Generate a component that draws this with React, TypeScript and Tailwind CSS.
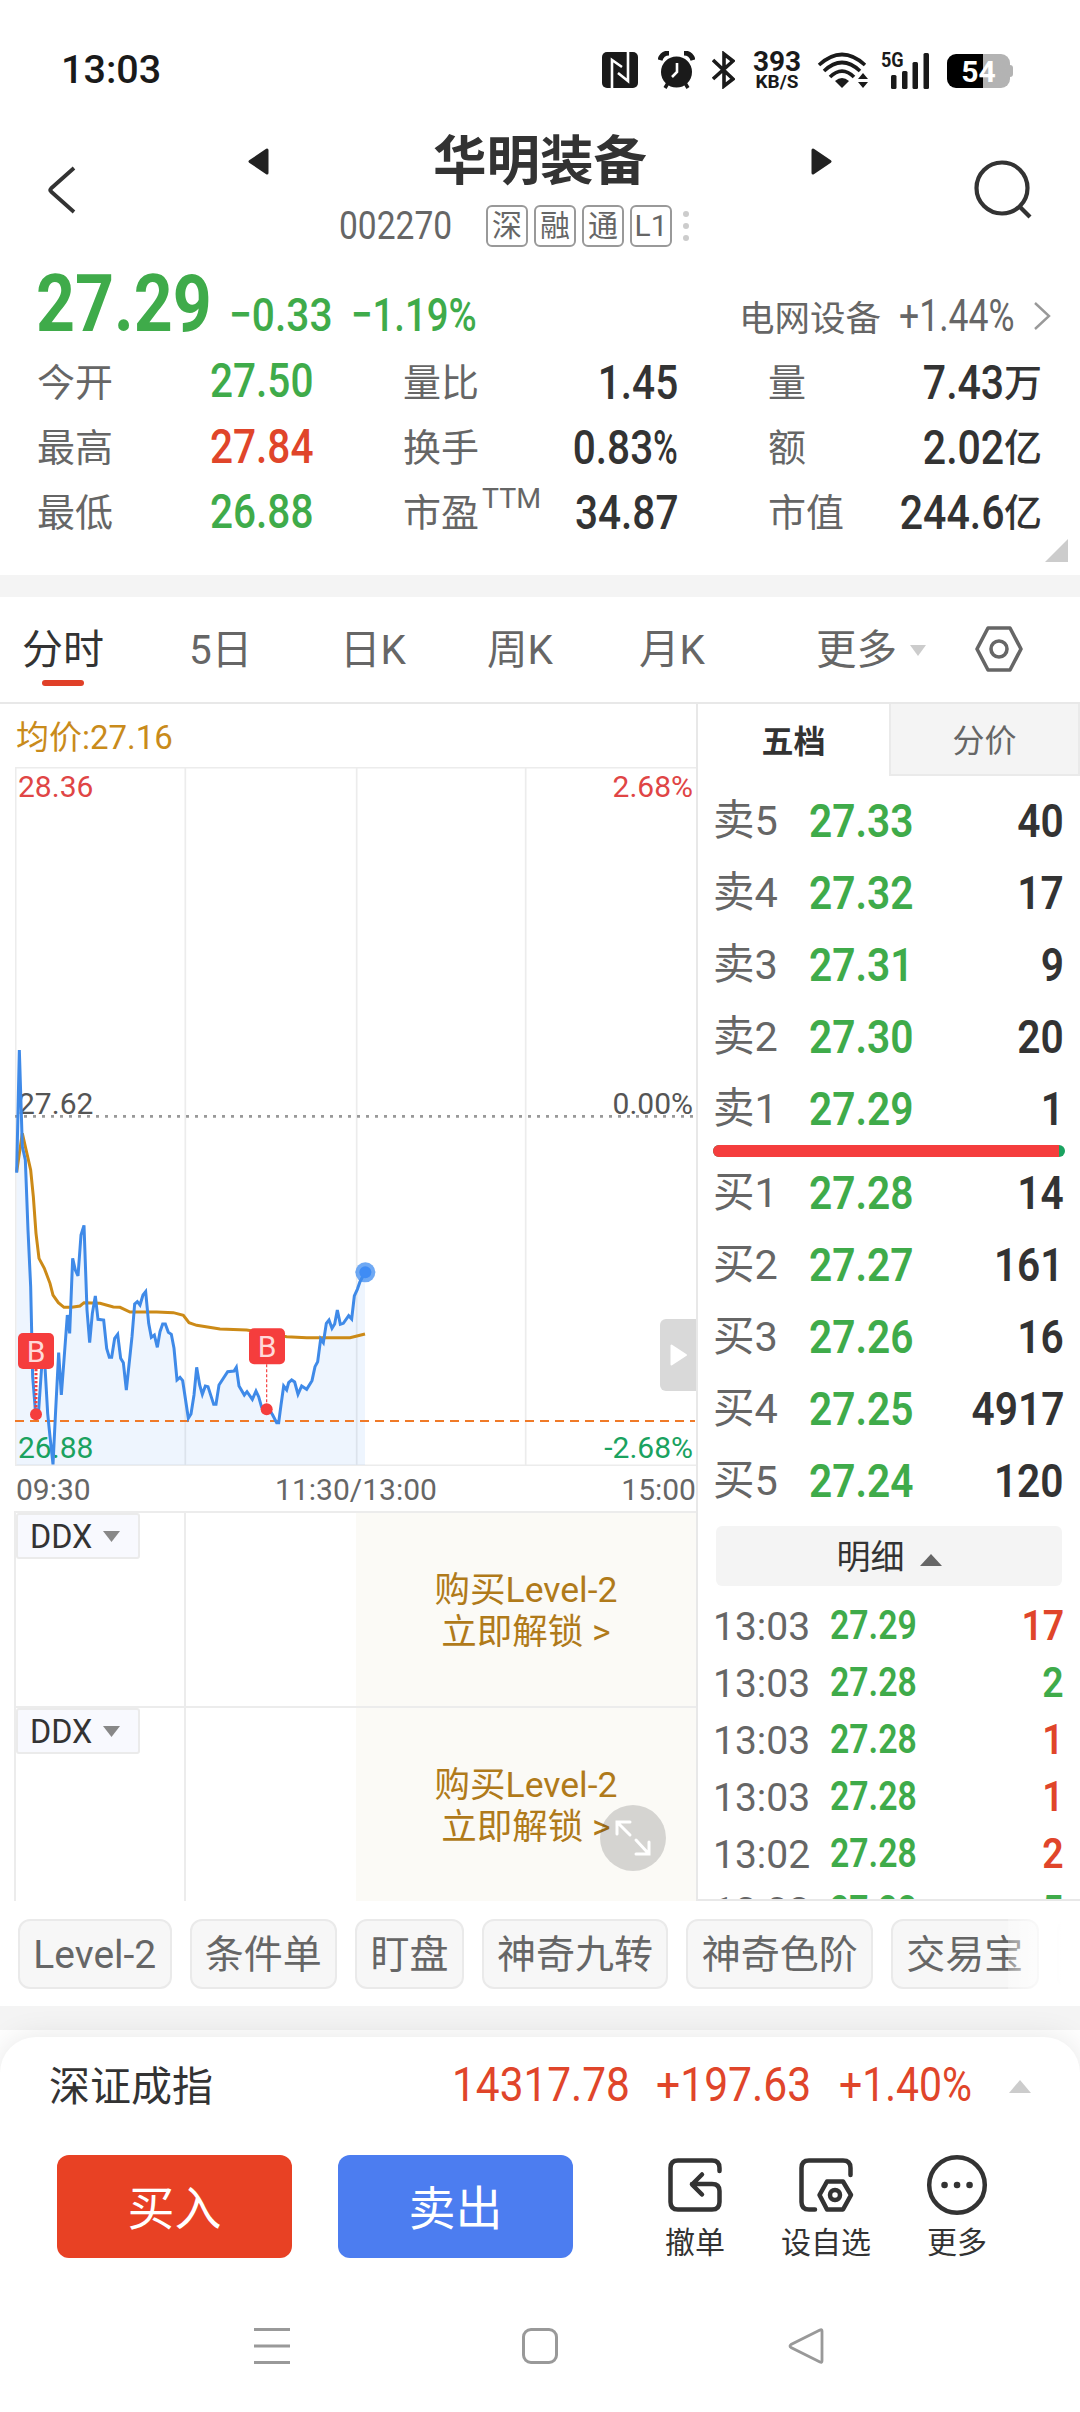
import type { ReactNode } from "react";
import clsx from "clsx";

const GREEN = "text-[#3fab4a]";
const RED = "text-[#e0452a]";
const DARK = "text-[#333]";

// Figures are set slightly condensed, like the DIN face trading apps use.
function Num({ children, className }: { children: ReactNode; className?: string }) {
  return <span className={clsx("inline-block whitespace-nowrap", className)}>{children}</span>;
}

function StatusBar() {
  return (
    <div className="flex h-[124px] items-center pt-4 pl-[61px] text-[#1a1a1a]">
      <span className="w-[541px] text-[39.5px] font-medium">13:03</span>
      <svg className="h-9 w-9" viewBox="0 0 36 36">
        <rect width="36" height="36" rx="5" fill="#1a1a1a" />
        <path d="M10 36V8L20 15M26 0V29L16 21" fill="none" stroke="#fff" strokeWidth="2.6" />
      </svg>
      <svg className="ml-5 h-[38px] w-[37px]" viewBox="0 0 37 38">
        <circle cx="18.5" cy="21" r="15.5" fill="#1a1a1a" />
        <path d="M2 9Q4 2 11 2M26 2Q33 2 35 9" fill="none" stroke="#1a1a1a" strokeWidth="5" />
        <path d="M10 32l-3 5M27 32l3 5" stroke="#1a1a1a" strokeWidth="3.5" />
        <path d="M19 12v9l-5 5" fill="none" stroke="#fff" strokeWidth="2.6" />
      </svg>
      <svg className="ml-[17px] h-[38px] w-[23px]" viewBox="0 0 23 38">
        <path d="M1 9l20 19-9 7V3l9 7L1 28" fill="none" stroke="#1a1a1a" strokeWidth="3.6" />
      </svg>
      <div className="ml-[16px] flex w-[52px] flex-col items-center">
        <span className="text-[28px] leading-[23px] font-bold">393</span>
        <span className="text-[19px] leading-[17px] font-bold">KB/S</span>
      </div>
      <svg className="ml-[14px] h-[36px] w-[52px]" viewBox="0 0 52 36">
        <g fill="none" stroke="#1a1a1a" strokeWidth="3.6">
          <path d="M2 13Q25 -8 48 13" />
          <path d="M7 19Q25 2 43 19" />
          <path d="M13 25Q25 13 37 25" />
        </g>
        <path d="M18 29Q25 23 32 29L25 36Z" fill="#1a1a1a" />
        <path d="M46 21l5 6H41ZM46 36l5-6H41Z" fill="#1a1a1a" />
      </svg>
      <div className="relative ml-[12px] h-[38px] w-[50px]">
        <span className="absolute -top-px left-0 origin-left scale-x-[0.86] text-[21px] leading-[20px] font-bold">5G</span>
        <svg className="absolute inset-0" viewBox="0 0 50 38" fill="#1a1a1a">
          <rect x="10" y="24" width="5.5" height="14" rx="1.5" />
          <rect x="21" y="20" width="5.5" height="18" rx="1.5" />
          <rect x="31.5" y="11" width="5.5" height="27" rx="1.5" />
          <rect x="42.5" y="2" width="5.5" height="36" rx="1.5" />
        </svg>
      </div>
      <div className="ml-[16px] flex items-center pt-[2px]">
        <div className="flex h-[34px] w-[63px] items-center justify-center rounded-[9px] bg-linear-to-r from-black from-[57%] to-[#b3b3b3] to-[57%] text-[30px] font-bold text-white">
          54
        </div>
        <div className="h-[12px] w-[3px] rounded-r-sm bg-[#b3b3b3]" />
      </div>
    </div>
  );
}

function Header() {
  return (
    <header className="flex h-[134px] items-start">
      <svg className="mt-[41px] ml-[46px] h-[50px] w-[32px]" viewBox="0 0 32 50">
        <path d="M28 3L5 23.5Q3.5 25 5 26.5L28 47" fill="none" stroke="#333" strokeWidth="3.8" />
      </svg>
      <div className="ml-[170px] flex w-[584px] flex-col">
        <div className="flex h-[70px] items-center justify-between">
          <svg className="mt-1 h-[27px] w-[22px]" viewBox="0 0 22 27">
            <path d="M19 2v23L2 13.5Z" fill="#222" stroke="#222" strokeWidth="3" strokeLinejoin="round" />
          </svg>
          <h1 className="pt-[5px] text-[53.5px] leading-[70px] font-bold text-[#333]">华明装备</h1>
          <svg className="mt-1 h-[27px] w-[22px]" viewBox="0 0 22 27">
            <path d="M3 2v23l17-11.5Z" fill="#222" stroke="#222" strokeWidth="3" strokeLinejoin="round" />
          </svg>
        </div>
        <div className="flex h-[64px] items-center pl-[91px] text-[#666]">
          <div className="w-[147px]">
            <Num className="origin-left scale-x-[0.86] text-[39px] leading-none">002270</Num>
          </div>
          <div className="flex gap-[6px]">
            {["深", "融", "通", "L1"].map((tag) => (
              <span
                key={tag}
                className="flex h-[42px] w-[42px] items-center justify-center rounded-[6px] border-2 border-[#999] text-[30px] leading-none"
              >
                {tag}
              </span>
            ))}
          </div>
          <div className="ml-[11px] flex flex-col gap-[6px]">
            <i className="size-[6px] rounded-full bg-[#ccc]" />
            <i className="size-[6px] rounded-full bg-[#ccc]" />
            <i className="size-[6px] rounded-full bg-[#ccc]" />
          </div>
        </div>
      </div>
      <svg className="mt-[35px] ml-[141px] h-[62px] w-[60px]" viewBox="0 0 60 62">
        <circle cx="29" cy="29" r="25.5" fill="none" stroke="#333" strokeWidth="4.2" />
        <path d="M46 47l11 11" stroke="#333" strokeWidth="4.2" />
      </svg>
    </header>
  );
}

const QUOTE_ROWS = [
  { a: ["今开", "27.50", GREEN], b: ["量比", "1.45"], c: ["量", "7.43", "万"] },
  { a: ["最高", "27.84", RED], b: ["换手", "0.83", "%"], c: ["额", "2.02", "亿"] },
  { a: ["最低", "26.88", GREEN], b: ["市盈", "34.87"], c: ["市值", "244.6", "亿"] },
];

function Quote() {
  return (
    <section className="relative h-[317px]">
      <div className={clsx("flex h-[92px] items-baseline pl-[36px] leading-[91px]", GREEN)}>
        <div className="w-[193px]">
          <Num className="origin-left scale-x-[0.845] text-[80.5px] font-bold">27.29</Num>
        </div>
        <div className="w-[122px]">
          <Num className="origin-left scale-x-[0.865] text-[47px] font-medium">−0.33</Num>
        </div>
        <div className="flex w-[388px]">
          <Num className="origin-left scale-x-[0.815] text-[47px] font-medium">−1.19%</Num>
        </div>
        <span className="w-[160px] text-[35.5px] text-[#666]">电网设备</span>
        <div className="w-[133px] text-[#666]">
          <Num className="origin-left scale-x-[0.79] text-[45px]">+1.44%</Num>
        </div>
        <svg className="h-[30px] w-[20px]" viewBox="0 0 20 30">
          <path d="M3 2l14 13L3 28" fill="none" stroke="#999" strokeWidth="2.4" />
        </svg>
      </div>
      {QUOTE_ROWS.map(({ a, b, c }) => (
        <div key={a[0]} className="flex h-[65.4px] items-center text-[38px] leading-[64px] text-[#666]">
          <span className="w-[172px] pl-[37px]">{a[0]}</span>
          <div className={clsx("w-[141px] text-right font-medium", a[2])}>
            <Num className="-ml-4 origin-right scale-x-[0.845] text-[48px]">{a[1]}</Num>
          </div>
          <div className="flex w-[229px] pl-[90px] whitespace-nowrap">
            {b[0]}
            {b[0] === "市盈" && <sup className="top-0 mt-[-14px] ml-[3px] text-[28.5px] leading-[64px]">TTM</sup>}
          </div>
          <div className={clsx("flex w-[136px] justify-end font-medium", DARK)}>
            <Num className="origin-right scale-x-[0.845] text-[48px]">{b[1]}</Num>
            {b[2] && <Num className="w-[25px] origin-left scale-x-[0.7] text-[48px]">{b[2]}</Num>}
          </div>
          <span className="w-[172px] pl-[90px] whitespace-nowrap">{c[0]}</span>
          <div className={clsx("flex w-[192px] justify-end font-medium", DARK)}>
            <Num className="origin-right scale-x-[0.855] text-[48px]">{c[1]}</Num>
            <span>{c[2]}</span>
          </div>
        </div>
      ))}
      <svg className="absolute right-[12px] bottom-[13px] size-[23px]" viewBox="0 0 23 23">
        <path d="M23 0v23H0Z" fill="#ccc" />
      </svg>
    </section>
  );
}

function PeriodTabs() {
  return (
    <nav className="flex h-[107px] items-center border-b-2 border-[#e8e8e8] pt-[2px] text-[40.5px] leading-none whitespace-nowrap text-[#666]">
      <div className="relative ml-[22px] w-[167px] text-[41px] text-[#333]">
        分时
        <i className="absolute top-[50px] left-[20px] h-[6px] w-[42px] rounded-sm bg-[#e04028]" />
      </div>
      <span className="w-[151px]">5日</span>
      <span className="w-[147px]">日K</span>
      <span className="w-[152px]">周K</span>
      <span className="w-[177px]">月K</span>
      <span className="w-[94px]">更多</span>
      <svg className="h-[11px] w-[16px]" viewBox="0 0 16 11">
        <path d="M0 0h16L8 11Z" fill="#ccc" />
      </svg>
      <svg className="mb-[4px] ml-[48px] h-[48px] w-[50px]" viewBox="0 0 50 48">
        <path d="M14 3H36L47 24 36 45H14L3 24Z" fill="none" stroke="#666" strokeWidth="3.6" strokeLinejoin="round" />
        <circle cx="25" cy="24" r="8" fill="none" stroke="#666" strokeWidth="3.6" />
      </svg>
    </nav>
  );
}

const PRICE_LINE =
  "50,518 58,150 67,440 76,480 84,690 92,860 98,1130 106,1230 116,1230 125,1100 135,1100 143,1240 150,1310 159,1393 167,1230 176,1058 184,1185 192,1080 202,945 209,1000 218,775 226,810 234,828 243,705 252,676 261,930 269,1028 277,940 286,888 294,958 311,960 320,1045 328,1072 335,1072 344,1015 353,1003 362,1075 370,1088 379,1170 396,1010 404,912 412,905 420,915 429,885 437,875 446,970 454,1012 463,1005 472,1042 480,995 488,972 496,972 505,997 514,1003 522,1045 531,1140 540,1132 548,1142 565,1255 573,1242 582,1185 590,1102 599,1155 607,1183 616,1158 624,1160 641,1213 648,1213 657,1155 683,1115 702,1113 709,1102 717,1158 733,1185 741,1175 757,1198 768,1173 776,1190 785,1222 793,1228 810,1232 818,1245 830,1268 836,1268 843,1215 851,1158 860,1170 866,1148 875,1140 884,1146 894,1183 905,1158 920,1168 936,1142 945,1100 953,1085 962,1017 970,1028 979,970 987,960 996,985 1004,972 1012,930 1021,973 1030,970 1046,947 1055,957 1063,888 1072,868 1080,845 1095,817";

const AVG_LINE =
  "50,515 67,400 76,440 92,510 100,590 108,700 117,775 133,805 150,850 159,885 175,908 192,922 215,922 240,918 252,908 300,910 340,921 360,922 390,936 470,936 520,938 550,946 567,968 590,976 660,987 740,990 800,1000 860,1010 920,1013 1050,1013 1095,1002";

function BuyMark({ x, y, dotX, dotY, bold }: { x: number; y: number; dotX: number; dotY: number; bold?: boolean }) {
  return (
    <g>
      <line
        x1={dotX}
        x2={dotX}
        y1={y + 108}
        y2={dotY}
        stroke="#f53d3d"
        strokeWidth={bold ? 9 : 3.5}
        strokeDasharray={bold ? "7 5" : "9 6"}
      />
      <circle cx={dotX} cy={dotY} r="18" fill="#f53d3d" />
      <rect x={x} y={y} width="108" height="108" rx="15" fill="#f53d3d" />
      <text x={x + 54} y={y + 87} textAnchor="middle" fontSize="90" fill="#ffd9d9">
        B
      </text>
    </g>
  );
}

function MinuteChart() {
  return (
    <div className="relative ml-[15px] h-[699px] text-[30px] leading-none">
      {/* 3 user units per pixel */}
      <svg className="absolute inset-0 h-[699px] w-[681px]" viewBox="45 -699 2043 2097">
        <g stroke="#ececec" strokeWidth="5" fill="none">
          <path d="M45 -697H2088M45 1396H2088M47 -699V1398M556 -699V1398M1070 -699V1398M1577 -699V1398" />
        </g>
        <polygon points={`${PRICE_LINE} 1095,1395 50,1395`} fill="#3f8cf0" fillOpacity="0.09" />
        <line x1="45" x2="2085" y1="349" y2="349" stroke="#999" strokeWidth="8" strokeDasharray="9 18" />
        <line x1="45" x2="2085" y1="1263" y2="1263" stroke="#f07a28" strokeWidth="6" strokeDasharray="27 18" />
        <polyline points={AVG_LINE} fill="none" stroke="#cc8a17" strokeWidth="9" />
      </svg>
      <span className="absolute top-[5px] left-[3px] text-[#e04545]">28.36</span>
      <span className="absolute top-[5px] right-[3px] text-[#e04545]">2.68%</span>
      <span className="absolute top-[322px] left-[3px] text-[#555]">27.62</span>
      <span className="absolute top-[322px] right-[3px] text-[#555]">0.00%</span>
      <span className="absolute bottom-[3px] left-[3px] text-[#1aa260]">26.88</span>
      <span className="absolute right-[3px] bottom-[3px] text-[#1aa260]">-2.68%</span>
      <svg className="absolute inset-0 h-[699px] w-[681px]" viewBox="45 -699 2043 2097">
        <polyline points={PRICE_LINE} fill="none" stroke="#3f8ae8" strokeWidth="9" />
        <circle cx="1096" cy="817" r="30" fill="#3f8cf0" fillOpacity="0.75" />
        <circle cx="1096" cy="817" r="18" fill="#3f8cf5" />
        <BuyMark x={54} y={999} dotX={108} dotY={1243} bold />
        <BuyMark x={747} y={985} dotX={800} dotY={1228} />
      </svg>
      <div className="absolute top-[552px] right-0 flex h-[72px] w-[36px] items-center rounded-l-[6px] bg-[#d9d9d9] pl-[10px]">
        <svg className="h-[22px] w-[18px]" viewBox="0 0 18 22">
          <path d="M1.5 1.5v19L16 11Z" fill="#fff" stroke="#fff" strokeWidth="2" strokeLinejoin="round" />
        </svg>
      </div>
    </div>
  );
}

function DdxPanel({ expandable }: { expandable?: boolean }) {
  return (
    <div className="relative ml-[14px] flex h-[195px] border-t-2 border-l-2 border-[#ececec]">
      <div className="w-[170px] border-r-2 border-[#ececec]">
        <div className="flex h-[46px] w-[124px] items-center rounded-[3px] border-2 border-[#ebebeb] bg-[#f8f9fe] pl-[12px] text-[33px] leading-none text-[#333]">
          <Num className="w-[63px] origin-left scale-x-[0.98]">DDX</Num>
          <svg className="ml-[10px] h-[11px] w-[17px]" viewBox="0 0 17 11">
            <path d="M0 0h17L8.5 11Z" fill="#888" />
          </svg>
        </div>
      </div>
      <div className="w-[170px]" />
      <div className="flex flex-1 flex-col justify-center bg-[#fbfaf6] pt-[3px] text-center text-[35.5px] leading-[42px] text-[#b07a1a]">
        <p>购买Level-2</p>
        <p>立即解锁 &gt;</p>
      </div>
      {expandable && (
        <div className="absolute top-[97px] right-[30px] flex size-[66px] items-center justify-center rounded-full bg-black/15">
          <svg className="size-[36px]" viewBox="0 0 36 36" fill="none" stroke="#fff" strokeWidth="3" strokeLinecap="round">
            <path d="M2 14V2H15M3 3L15 15M34 22V34H21M33 33L21 20" />
          </svg>
        </div>
      )}
    </div>
  );
}

const ASKS = [
  ["卖5", "27.33", "40"],
  ["卖4", "27.32", "17"],
  ["卖3", "27.31", "9"],
  ["卖2", "27.30", "20"],
  ["卖1", "27.29", "1"],
];

const BIDS = [
  ["买1", "27.28", "14"],
  ["买2", "27.27", "161"],
  ["买3", "27.26", "16"],
  ["买4", "27.25", "4917"],
  ["买5", "27.24", "120"],
];

const TICKS = [
  ["13:03", "27.29", "17", RED],
  ["13:03", "27.28", "2", GREEN],
  ["13:03", "27.28", "1", RED],
  ["13:03", "27.28", "1", RED],
  ["13:02", "27.28", "2", RED],
  ["13:02", "27.28", "5", GREEN],
];

function BookRow({ row }: { row: string[] }) {
  return (
    <div className="flex h-[72px] items-center pr-[16px] pl-[15px] leading-[70px]">
      <span className="w-[96px] text-[41.5px] text-[#666]">{row[0]}</span>
      <Num className={clsx("origin-left scale-x-[0.865] text-[47px] font-semibold", GREEN)}>{row[1]}</Num>
      <Num className={clsx("ml-auto origin-right scale-x-[0.865] text-[47px] font-semibold", DARK)}>{row[2]}</Num>
    </div>
  );
}

function OrderBook() {
  return (
    <aside className="flex h-[1197px] w-[384px] flex-col overflow-hidden border-b-2 border-l-2 border-[#e8e8e8]">
      <div className="flex h-[72px] shrink-0 text-[32px] leading-none">
        <div className="flex w-[191px] items-center justify-center pt-[3px] font-bold text-[#333]">五档</div>
        <div className="flex flex-1 items-center justify-center border-2 border-t-0 border-[#eaeaea] bg-[#f4f4f4] pt-[3px] text-[#666]">
          分价
        </div>
      </div>
      <div className="shrink-0 pt-[9px]">
        {ASKS.map((row) => (
          <BookRow key={row[0]} row={row} />
        ))}
      </div>
      <div className="mr-[15px] ml-[15px] flex h-[12px] shrink-0 overflow-hidden rounded-full bg-[#1aa260]">
        <div className="w-[346px] bg-[#f53d3d]" />
      </div>
      <div className="shrink-0">
        {BIDS.map((row) => (
          <BookRow key={row[0]} row={row} />
        ))}
      </div>
      <div className="mt-[9px] mr-[18px] ml-[18px] flex h-[60px] shrink-0 items-center justify-center rounded-[6px] bg-[#f4f4f4] pt-[2px] text-[34px] leading-none text-[#333]">
        明细
        <svg className="mt-[5px] ml-[15px] h-[12px] w-[22px]" viewBox="0 0 22 12">
          <path d="M11 0l11 12H0Z" fill="#666" />
        </svg>
      </div>
      <div className="mt-[13px] shrink-0">
        {TICKS.map(([time, price, qty, color], i) => (
          <div key={i} className="flex h-[57px] items-center pr-[16px] pl-[15px] leading-[57px]">
            <span className="w-[117px] text-[39px] text-[#666]">{time}</span>
            <Num className={clsx("-mt-[5px] origin-left scale-x-[0.845] text-[40px] font-semibold", GREEN)}>{price}</Num>
            <Num className={clsx("-mt-[4px] ml-auto origin-right scale-x-[0.87] text-[43px] font-semibold", color)}>
              {qty}
            </Num>
          </div>
        ))}
      </div>
    </aside>
  );
}

const CHIPS = ["Level-2", "条件单", "盯盘", "神奇九转", "神奇色阶", "交易宝"];

function Chips() {
  return (
    <div className="relative flex h-[105px] items-center gap-[18px] overflow-hidden pl-[18px]">
      {CHIPS.map((chip) => (
        <span
          key={chip}
          className="flex h-[70px] shrink-0 items-center rounded-[12px] border-2 border-[#eaeaea] bg-[#f7f7f7] px-[13.3px] pt-[3px] text-[39px] leading-none text-[#666]"
        >
          {chip}
        </span>
      ))}
      <span className="h-[70px] w-[60px] shrink-0 rounded-[12px] border-2 border-[#eaeaea] bg-[#f7f7f7]" />
      <div className="absolute inset-y-0 right-0 w-[72px] bg-linear-to-r from-white/30 to-white to-75%" />
    </div>
  );
}

function Action({ label, className, children }: { label: string; className: string; children: ReactNode }) {
  return (
    <div className={clsx("flex flex-col items-center text-[30px] leading-none whitespace-nowrap text-[#333]", className)}>
      <svg
        className="mb-[11px] size-[64px]"
        viewBox="0 0 64 64"
        fill="none"
        stroke="#333"
        strokeWidth="4.5"
        strokeLinecap="round"
        strokeLinejoin="round"
      >
        {children}
      </svg>
      {label}
    </div>
  );
}

function BottomSheet() {
  return (
    <div className="relative mt-[7px] flex-1 rounded-t-[36px] bg-white shadow-[0_0_30px_rgba(0,0,0,0.1)]">
      <div className={clsx("flex h-[98px] items-center pl-[49px] leading-none", RED)}>
        <span className="w-[403px] pt-[3px] text-[41px] text-[#333]">深证成指</span>
        <div className="w-[204px] pb-[3px]">
          <Num className="origin-left scale-x-[0.865] text-[49px]">14317.78</Num>
        </div>
        <div className="w-[183px] pb-[3px]">
          <Num className="origin-left scale-x-[0.87] text-[49px]">+197.63</Num>
        </div>
        <div className="w-[170px] pb-[3px]">
          <Num className="origin-left scale-x-[0.835] text-[49px]">+1.40%</Num>
        </div>
        <svg className="h-[13px] w-[22px]" viewBox="0 0 22 13">
          <path d="M11 0l11 13H0Z" fill="#ccc" />
        </svg>
      </div>
      <div className="flex h-[123px] items-end pl-[57px] text-[47px] text-white">
        <button className="h-[103px] w-[235px] rounded-[12px] bg-[#e84124] pt-[5px]">买入</button>
        <button className="ml-[46px] h-[103px] w-[235px] rounded-[12px] bg-[#4c7df0] pt-[5px]">卖出</button>
        <Action label="撤单" className="ml-[75px] w-[94px]">
          <path d="M56.5 18V15Q56.5 7.5 49 7.5H15Q7.5 7.5 7.5 15V49Q7.5 56.5 15 56.5H49Q56.5 56.5 56.5 49V38Q56.5 31 49 31H29M39 21.5L29 31.5 39 41.5" />
        </Action>
        <Action label="设自选" className="ml-[37px] w-[94px]">
          <path d="M56.5 22V15Q56.5 7.5 49 7.5H15Q7.5 7.5 7.5 15V49Q7.5 56.5 15 56.5H21" />
          <path d="M33 28.5H49L57 42 49 56.5H33L25.5 42Z" />
          <circle cx="41" cy="42" r="5" />
        </Action>
        <Action label="更多" className="ml-[37px] w-[94px]">
          <circle cx="32" cy="32" r="27.8" />
          <path d="M19.5 32h.1M32 32h.1M44.5 32h.1" strokeWidth="6.5" />
        </Action>
      </div>
      <div className="flex items-center pt-[69px] pl-[254px]">
        <svg className="h-[38px] w-[36px]" viewBox="0 0 36 38" stroke="#999" strokeWidth="3">
          <path d="M0 2.5H36M0 19H36M0 35.5H36" />
        </svg>
        <div className="ml-[232px] size-[36px] rounded-[9px] border-3 border-[#999]" />
        <svg className="ml-[230px] h-[38px] w-[36px]" viewBox="0 0 36 38">
          <path
            d="M34 4V34Q34 36 32 35L3 20.5Q1 19 3 17.5L32 3Q34 2 34 4Z"
            fill="none"
            stroke="#999"
            strokeWidth="2.8"
          />
        </svg>
      </div>
    </div>
  );
}

export default function App() {
  return (
    <div className="flex h-[2412px] w-[1080px] flex-col overflow-hidden bg-white font-[Roboto,'Noto_Sans_CJK_SC',sans-serif]">
      <StatusBar />
      <Header />
      <Quote />
      <div className="h-[22px] bg-[#f4f4f4]" />
      <PeriodTabs />
      <main className="flex h-[1197px]">
        <div className="w-[696px]">
          <div className="flex h-[63px] items-center pt-[3px] pl-[16px] text-[33px] leading-none text-[#c98b1b]">均价:27.16</div>
          <MinuteChart />
          <div className="relative ml-[16px] flex h-[45px] items-center justify-between pt-[2px] text-[30px] leading-none text-[#666]">
            <span>09:30</span>
            <span>11:30/13:00</span>
            <span>15:00</span>
          </div>
          <DdxPanel />
          <DdxPanel expandable />
        </div>
        <OrderBook />
      </main>
      <Chips />
      <div className="h-[24px] bg-[#f4f4f4]" />
      <BottomSheet />
    </div>
  );
}
